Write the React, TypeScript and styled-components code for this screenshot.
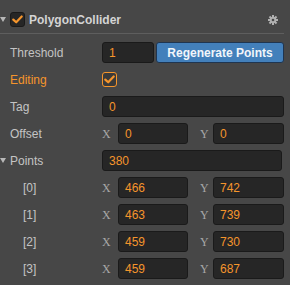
import React from 'react';
import styled, { createGlobalStyle } from 'styled-components';

const ORANGE = '#f5952c';

const GlobalStyle = createGlobalStyle`
	html, body {
		margin: 0;
		padding: 0;
		background: #474747;
	}
	body {
		font-family: 'Liberation Sans', Arial, sans-serif;
		font-size: 12px;
		color: #c4c4c4;
	}
`;

const Panel = styled.div`
	width: 290px;
	height: 285px;
	background: #474747;
	overflow: hidden;
`;

const Header = styled.div`
	height: 34px;
	margin-right: 6px;
	border-bottom: 1px solid #5e5e5e;
	display: flex;
	align-items: center;
	box-sizing: border-box;
	padding-top: 6px;
`;

const Caret = styled.span`
	width: 0;
	height: 0;
	border-left: 3px solid transparent;
	border-right: 3px solid transparent;
	border-top: 5px solid #b8b8b8;
	margin-right: 4px;
`;

const HeaderTitle = styled.span`
	margin-left: 4px;
	font-weight: bold;
	font-size: 12px;
	color: #d4d4d4;
	flex: 1;
`;

const GearWrap = styled.span`
	display: flex;
	margin-right: 6px;
`;

const Rows = styled.div`
	padding: 5px 6px 0 0;
	display: flex;
	flex-direction: column;
`;

const Row = styled.div`
	height: 27px;
	display: flex;
	align-items: center;
`;

const Label = styled.div<{ $indent?: number; $active?: boolean }>`
	width: ${(p) => 102 - (p.$indent ?? 10)}px;
	padding-left: ${(p) => p.$indent ?? 10}px;
	flex-shrink: 0;
	display: flex;
	align-items: center;
	color: ${(p) => (p.$active ? ORANGE : '#c4c4c4')};
	font-size: 12px;
`;

const RowCaret = styled(Caret)`
	margin-left: -10px;
	margin-right: 4px;
`;

const Field = styled.div<{ $trimRight?: number }>`
	flex: 1;
	height: 21px;
	box-sizing: border-box;
	background: #262626;
	border: 1px solid #1a1a1a;
	border-radius: 3px;
	margin-right: ${(p) => p.$trimRight ?? 0}px;
	padding-left: 6px;
	display: flex;
	align-items: center;
	color: ${ORANGE};
	font-size: 12px;
	min-width: 0;
`;

const Value = styled.div`
	flex: 1;
	display: flex;
	min-width: 0;
`;

const Button = styled.div`
	width: 128px;
	height: 21px;
	box-sizing: border-box;
	margin-left: 2px;
	background: #4380bb;
	border: 1px solid #1f3550;
	border-radius: 3px;
	color: #f2f6fa;
	font-weight: bold;
	font-size: 12px;
	display: flex;
	align-items: center;
	justify-content: center;
`;

const Vec = styled.div`
	flex: 1;
	display: grid;
	grid-template-columns: 16px 70px 12px 13px 1fr;
	align-items: center;
`;

const Axis = styled.span<{ $col: number }>`
	grid-column: ${(p) => p.$col};
	font-family: 'Liberation Serif', 'Times New Roman', serif;
	font-size: 12px;
	color: #a8a8a8;
	line-height: 1;
`;

const Box = styled.span<{ $outlined?: boolean }>`
	width: 15px;
	height: 15px;
	box-sizing: border-box;
	border-radius: 3px;
	background: ${(p) => (p.$outlined ? '#3a3a3a' : '#262626')};
	border: 1px solid ${(p) => (p.$outlined ? ORANGE : '#1a1a1a')};
	display: flex;
	align-items: center;
	justify-content: center;
`;

const Check = () => (
	<svg width="11" height="9" viewBox="0 0 11 9">
		<path d="M1.3 4.6 L4.2 7.3 L9.7 1.5" fill="none" stroke={ORANGE} strokeWidth="2.2" strokeLinecap="round" strokeLinejoin="round" />
	</svg>
);

const Gear = () => (
	<svg width="10" height="10" viewBox="0 0 10 10">
		<g fill="#b0b0b0">
			<circle cx="5" cy="5" r="3.3" />
			{[0, 45, 90, 135].map((a) => (
				<rect key={a} x="4" y="0" width="2" height="10" transform={`rotate(${a} 5 5)`} />
			))}
		</g>
		<circle cx="5" cy="5" r="1.3" fill="#474747" />
	</svg>
);

const points = [
	[466, 742],
	[463, 739],
	[459, 730],
	[459, 687]
];

const VecField = ({ x, y }: { x: number; y: number }) => (
	<Vec>
		<Axis $col={1}>X</Axis>
		<Field>{x}</Field>
		<Axis $col={4}>Y</Axis>
		<Field>{y}</Field>
	</Vec>
);

const App = () => {
	return (
		<Panel>
			<GlobalStyle />
			<Header>
				<Caret />
				<Box>
					<Check />
				</Box>
				<HeaderTitle>PolygonCollider</HeaderTitle>
				<GearWrap>
					<Gear />
				</GearWrap>
			</Header>
			<Rows>
				<Row>
					<Label>Threshold</Label>
					<Value>
						<Field>1</Field>
						<Button>Regenerate Points</Button>
					</Value>
				</Row>
				<Row>
					<Label $active>Editing</Label>
					<Box $outlined>
						<Check />
					</Box>
				</Row>
				<Row>
					<Label>Tag</Label>
					<Value>
						<Field>0</Field>
					</Value>
				</Row>
				<Row>
					<Label>Offset</Label>
					<VecField x={0} y={0} />
				</Row>
				<Row>
					<Label>
						<RowCaret />
						Points
					</Label>
					<Value>
						<Field $trimRight={2}>380</Field>
					</Value>
				</Row>
				{points.map(([x, y], i) => (
					<Row key={i}>
						<Label $indent={23}>[{i}]</Label>
						<VecField x={x} y={y} />
					</Row>
				))}
			</Rows>
		</Panel>
	);
};

export default App;
